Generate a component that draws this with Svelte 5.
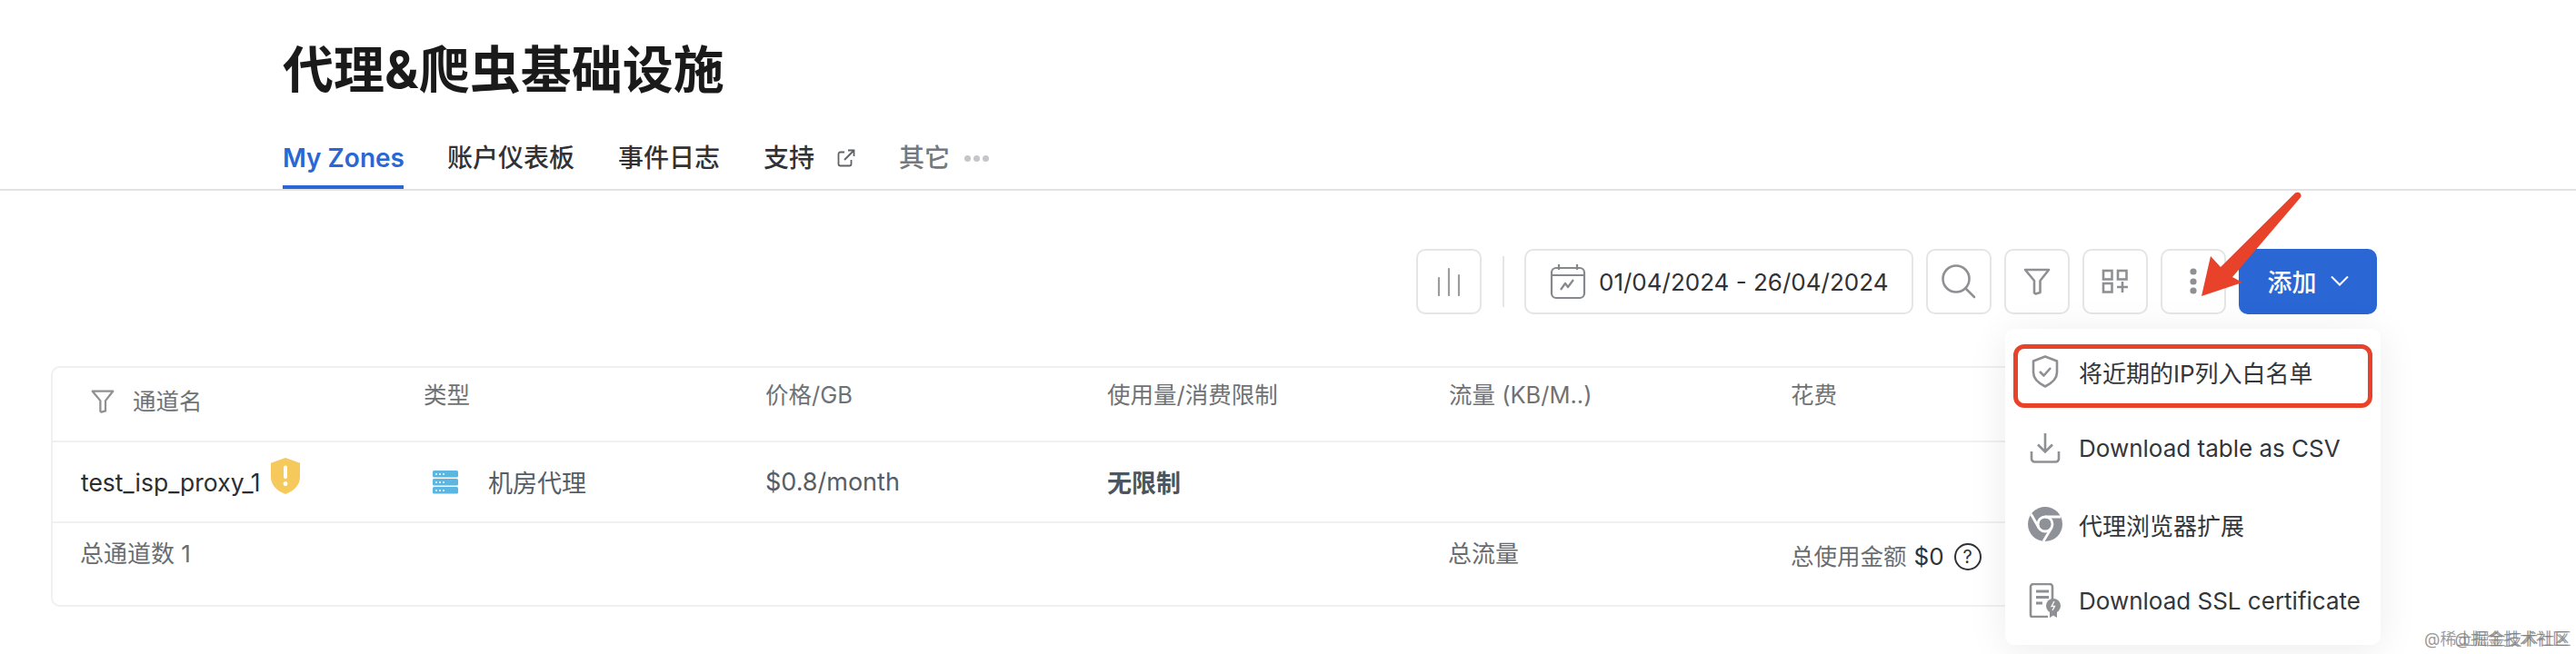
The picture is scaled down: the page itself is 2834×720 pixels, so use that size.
<script>
  const heads = ['类型', '价格/GB', '使用量/消费限制', '流量 (KB/M..)', '花费'];
</script>

<div class="page">
  <header class="head">
    <h1>代理&amp;爬虫基础设施</h1>
    <nav class="tabs">
      <span class="tab active">My Zones</span>
      <span class="tab">账户仪表板</span>
      <span class="tab">事件日志</span>
      <span class="tab">支持
        <svg class="ext" width="20" height="20" viewBox="0 0 20 20" fill="none" stroke="#5f6368" stroke-width="1.8"><path d="M8 3.5H3.5a2 2 0 0 0-2 2v11a2 2 0 0 0 2 2h10a2 2 0 0 0 2-2V12"/><path d="M8 12 18 2M12 1.5h6.5V8"/></svg>
      </span>
      <span class="tab other">其它
        <span class="dots"><i></i><i></i><i></i></span>
      </span>
    </nav>
  </header>

  <div class="toolbar">
    <button class="ib" aria-label="chart">
      <svg width="30" height="32" viewBox="0 0 30 32" fill="none" stroke="#9a9c9f" stroke-width="2.2" stroke-linecap="round"><path d="M4 12v19M15 2v29M26 9v22"/></svg>
    </button>
    <span class="sep"></span>
    <div class="date">
      <svg width="40" height="40" viewBox="0 0 40 40" fill="none" stroke="#85888c" stroke-width="2.2"><rect x="2" y="5" width="36" height="33" rx="5"/><path d="M2 13h36M10 1v6M30 1v6"/><path d="M12 29l5-7 3 4 6-8" stroke-linejoin="round"/></svg>
      <span>01/04/2024 - 26/04/2024</span>
    </div>
    <button class="ib" aria-label="search">
      <svg width="38" height="38" viewBox="0 0 38 38" fill="none" stroke="#8e9093" stroke-width="2.6" stroke-linecap="round"><circle cx="16" cy="16" r="14.5"/><path d="M27 27l9 9"/></svg>
    </button>
    <button class="ib" aria-label="filter">
      <svg width="30" height="30" viewBox="0 0 30 30" fill="none" stroke="#8e9093" stroke-width="2.6" stroke-linejoin="round"><path d="M2 2h26L18.500 14v13l-5 1.500-1.500-1V14z"/></svg>
    </button>
    <button class="ib" aria-label="add widget">
      <svg width="30" height="28" viewBox="0 0 30 28" fill="none" stroke="#8e9093" stroke-width="2.6"><rect x="2" y="2" width="9.500" height="9.500"/><rect x="18" y="2" width="9.500" height="9.500"/><rect x="2" y="16" width="9.500" height="9.500"/><path d="M23 14v12M17 20h12"/></svg>
    </button>
    <button class="ib" aria-label="more">
      <svg width="10" height="30" viewBox="0 0 10 30" fill="#8e9093"><circle cx="5" cy="4" r="3.600"/><circle cx="5" cy="15" r="3.600"/><circle cx="5" cy="25" r="3.600"/></svg>
    </button>
    <button class="add">添加
      <svg width="20" height="12" viewBox="0 0 20 12" fill="none" stroke="#fff" stroke-width="2"><path d="M1 1.500l9 9 9-9"/></svg>
    </button>
  </div>

  <section class="card">
    <div class="row rh">
      <div class="c first">
        <svg width="26" height="26" viewBox="0 0 30 30" fill="none" stroke="#8e9093" stroke-width="2.600" stroke-linejoin="round"><path d="M2 2h26L18.500 14v13l-5 1.500-1.500-1V14z"/></svg>
        <span>通道名</span>
      </div>
      {#each heads as h}<div class="c">{h}</div>{/each}
    </div>
    <div class="row rb">
      <div class="c name">
        <span>test_isp_proxy_1</span>
        <svg class="warn" width="34" height="40" viewBox="0 0 34 38" preserveAspectRatio="none"><path d="M17 0l16 5.500V20c0 9-7 15-16 18C8 35 1 29 1 20V5.500z" fill="#f5c95c"/><rect x="15" y="8" width="4" height="14" rx="2" fill="#fff"/><circle cx="17" cy="27" r="2.400" fill="#fff"/></svg>
      </div>
      <div class="c type">
        <svg width="28" height="26" viewBox="0 0 28 26" fill="#5bb6e2"><rect y="0" width="28" height="7.500" rx="1.500"/><rect y="9" width="28" height="7.500" rx="1.500"/><rect y="18" width="28" height="7.500" rx="1.500"/><path d="M3 3h2v2H3zM7 3h2v2H7zM11 3h2v2h-2zM3 12h2v2H3zM7 12h2v2H7zM11 12h2v2h-2zM3 21h2v2H3zM7 21h2v2H7zM11 21h2v2h-2z" fill="#d4eefa"/></svg>
        <span>机房代理</span>
      </div>
      <div class="c price">$0.8/month</div>
      <div class="c limit">无限制</div>
      <div class="c"></div>
      <div class="c"></div>
    </div>
    <div class="row rf">
      <div class="c lead">总通道数 1</div>
      <div class="c"></div>
      <div class="c"></div>
      <div class="c"></div>
      <div class="c lead">总流量</div>
      <div class="c total">
        <span>总使用金额</span><span class="sum">$0</span>
        <span class="q">?</span>
      </div>
    </div>
  </section>

  <div class="menu">
    <div class="item">
      <span class="mi"><svg width="30" height="36" viewBox="0 0 30 36" fill="none" stroke="#8e9093" stroke-width="2.600" stroke-linejoin="round"><path d="M15 1.500l13 5V19c0 7-6 12-13 15.500C8 31 2 26 2 19V6.500z"/><path d="M9 18l4.500 4.500L21 14"/></svg></span>
      <span>将近期的IP列入白名单</span>
    </div>
    <div class="item">
      <span class="mi"><svg width="34" height="34" viewBox="0 0 34 34" fill="none" stroke="#8e9093" stroke-width="2.600"><path d="M17 1v20M9 13.500l8 8 8-8"/><path d="M2 21v8a3.500 3.500 0 0 0 3.500 3.500h23A3.500 3.500 0 0 0 32 29v-8"/></svg></span>
      <span>Download table as CSV</span>
    </div>
    <div class="item">
      <span class="mi"><svg width="38" height="38" viewBox="0 0 38 38"><circle cx="19" cy="19" r="19" fill="#8e9298"/><g fill="none" stroke="#fff" stroke-width="2.800"><circle cx="19" cy="19" r="8"/><path d="M19 11h17M12 23L3.500 8M26 23l-9 15"/></g></svg></span>
      <span>代理浏览器扩展</span>
    </div>
    <div class="item">
      <span class="mi"><svg width="36" height="38" viewBox="0 0 36 38" fill="none"><path d="M26 18V4a3 3 0 0 0-3-3H5a3 3 0 0 0-3 3v31a2 2 0 0 0 2 2h17" stroke="#8e9093" stroke-width="2.600"/><path d="M8 9h14M8 15.500h14M8 22h7" stroke="#8e9093" stroke-width="2.800"/><circle cx="27" cy="25" r="8" fill="#8e9093"/><path d="M23 31v7l4-2.500 4 2.500v-7z" fill="#8e9093"/><path d="M28 20l-3 5.500h3.500L26 30" stroke="#fff" stroke-width="1.300"/></svg></span>
      <span>Download SSL certificate</span>
    </div>
    <div class="mark"></div>
  </div>

  <svg class="arrow" width="120" height="120" viewBox="0 0 120 120" aria-hidden="true">
    <path d="M113 1.500C115 0 118 0.500 119 2.500C120 4.500 119.500 6 118 7.500L44 94L55 100L10 115L20 71L31 83Z" fill="#e8432a"/>
  </svg>

  <div class="wm">
    <span>@稀土掘金技术社区</span>
    <span class="wm2">@掘金技术社区</span>
  </div>
</div>

<style>
  :global(body) {
    margin: 0;
    background: #fff;
    font-family: Inter, "Noto Sans CJK SC", sans-serif;
    color: #333;
  }
  .page {
    position: relative;
    width: 2834px;
    height: 720px;
    overflow: hidden;
  }
  .head {
    height: 210px;
    box-sizing: border-box;
    padding: 41px 0 0 311px;
    border-bottom: 2px solid #e2e2e2;
    display: flex;
    flex-direction: column;
  }
  h1 {
    margin: 0;
    font-size: 56px;
    line-height: 72px;
    font-weight: 700;
    color: #1a1a1a;
  }
  .tabs {
    margin-top: 33px;
    display: flex;
    gap: 48px;
    height: 62px;
  }
  .tab {
    display: flex;
    gap: 25px;
    align-items: center;
    height: 62px;
    padding-bottom: 6px;
    box-sizing: border-box;
    font-size: 28px;
    font-weight: 500;
    color: #2f3236;
    line-height: 1;
  }
  .tab.active {
    color: #2a66d4;
    font-weight: 600;
    border-bottom: 4px solid #2a66d4;
    padding-bottom: 2px;
    width: 133px;
    white-space: nowrap;
  }
  .tab.other {
    color: #75787c;
    gap: 16px;
  }
  .dots { display: flex; gap: 3px; }
  .dots i {
    width: 7px;
    height: 7px;
    border-radius: 50%;
    background: #c4c6c9;
  }
  .toolbar {
    display: flex;
    justify-content: flex-end;
    align-items: center;
    gap: 14px;
    margin-top: 64px;
    padding-right: 219px;
    height: 72px;
  }
  .ib, .date {
    box-sizing: border-box;
    height: 72px;
    border: 2px solid #e4e5e6;
    border-radius: 10px;
    background: #fff;
    display: flex;
    align-items: center;
    justify-content: center;
    padding: 0;
  }
  .ib { width: 72px; }
  .sep {
    width: 2px;
    height: 56px;
    background: #e4e5e6;
    margin: 0 8px 0 9px;
  }
  .date {
    width: 428px;
    gap: 14px;
    justify-content: flex-start;
    padding-left: 26px;
    font-size: 26px;
    color: #2f3236;
  }
  .add {
    width: 152px;
    height: 72px;
    border: 0;
    border-radius: 10px;
    background: #2a66d4;
    color: #fff;
    font: 500 27px Inter, "Noto Sans CJK SC", sans-serif;
    display: flex;
    align-items: center;
    justify-content: center;
    gap: 15px;
    padding: 0 0 2px;
  }
  .card {
    box-sizing: border-box;
    width: 2548px;
    height: 265px;
    margin: 57px 0 0 56px;
    border: 2px solid #f0f0f1;
    border-radius: 10px;
    font-size: 25.500px;
  }
  .row {
    display: grid;
    grid-template-columns: 377px repeat(4, 376px) 1fr;
    padding-left: 31px;
    border-bottom: 2px solid #f0f0f1;
    box-sizing: border-box;
  }
  .row:last-child { border-bottom: 0; }
  .rh { height: 82px; padding-top: 12px; color: #6f7275; line-height: 36px; }
  .rb { height: 89px; align-items: center; color: #555e68; font-size: 26.500px; }
  .rf { height: 92px; padding-top: 16px; line-height: 36px; color: #6a6d70; }
  .c { min-width: 0; white-space: nowrap; }
  .first {
    display: flex;
    align-items: center;
    align-self: start;
    height: 36px;
    gap: 20px;
    margin-left: 11px;
    margin-top: 7px;
  }
  .name {
    display: flex;
    align-items: center;
    gap: 11px;
    color: #2b2e31;
  }
  .warn { margin-top: -14px; }
  .type {
    display: flex;
    align-items: center;
    gap: 33px;
    padding-left: 10px;
    font-size: 27px;
  }
  .price { font-size: 27px; }
  .limit { font-weight: 700; font-size: 27px; color: #4a5560; }
  .lead { font-size: 26px; margin-left: -1px; }
  .total {
    display: flex;
    align-items: center;
    gap: 8px;
    margin-top: 3px;
    height: 36px;
  }
  .sum { color: #2f3236; font-size: 26px; }
  .q {
    box-sizing: border-box;
    width: 30px;
    height: 30px;
    margin-left: 3px;
    border: 2px solid #2f3236;
    border-radius: 50%;
    color: #2f3236;
    font-size: 20px;
    line-height: 26px;
    text-align: center;
  }
  .menu {
    position: absolute;
    left: 2206px;
    top: 362px;
    width: 413px;
    height: 348px;
    box-sizing: border-box;
    padding: 5px 0 7px;
    background: #fff;
    border-radius: 10px;
    box-shadow: 0 6px 44px rgba(0, 0, 0, 0.08);
    font-size: 26px;
    color: #33363a;
  }
  .item {
    display: flex;
    align-items: center;
    height: 84px;
    padding-left: 24px;
    gap: 17px;
    white-space: nowrap;
  }
  .mi {
    width: 40px;
    display: flex;
    justify-content: center;
  }
  .mark {
    position: absolute;
    left: 9px;
    top: 17px;
    width: 395px;
    height: 70px;
    box-sizing: border-box;
    border: 5px solid #e8432a;
    border-radius: 12px;
  }
  .arrow {
    position: absolute;
    left: 2412px;
    top: 211px;
  }
  .wm {
    position: absolute;
    left: 2667px;
    top: 692px;
    width: 159px;
    font-size: 18px;
    line-height: 24px;
    color: rgba(120, 120, 120, 0.75);
    white-space: nowrap;
  }
  .wm2 {
    position: absolute;
    right: 0;
    top: 0;
  }
</style>
